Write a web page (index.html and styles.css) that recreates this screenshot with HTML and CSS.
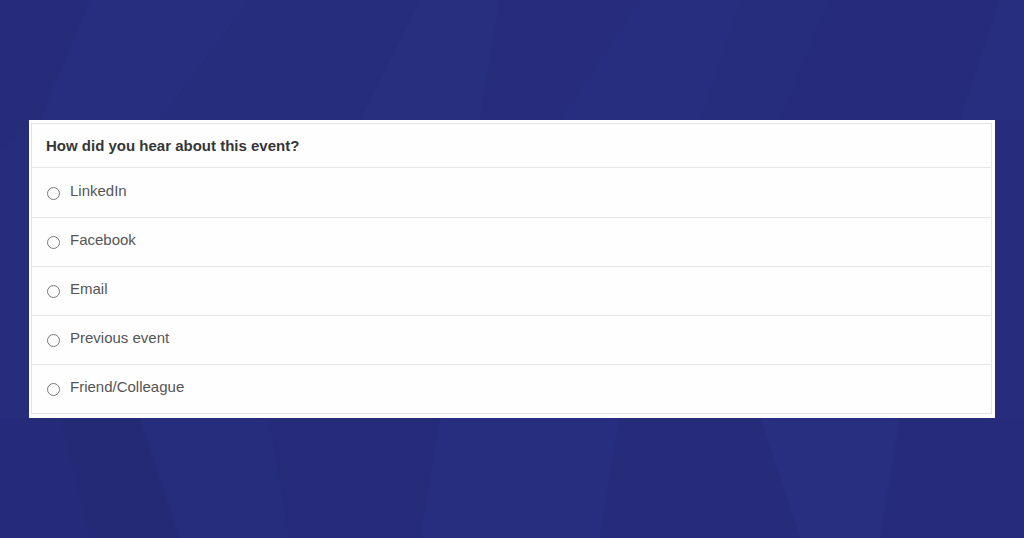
FILE: index.html
```html
<!DOCTYPE html>
<html>
<head>
<meta charset="utf-8">
<link rel="stylesheet" href="styles.css">
</head>
<body>
<svg class="bg" viewBox="0 0 1024 538" preserveAspectRatio="none" aria-hidden="true">
  <rect width="1024" height="538" fill="#272d7c"/>
  <polygon points="0,0 90,0 40,120 0,150" fill="#272c7a"/>
  <polygon points="90,0 250,0 160,120 40,120" fill="#282e7f"/>
  <polygon points="250,0 420,0 360,120 160,120" fill="#272d7d"/>
  <polygon points="420,0 500,0 480,120 360,120" fill="#282f7f"/>
  <polygon points="500,0 640,0 560,120 480,120" fill="#272c7b"/>
  <polygon points="640,0 740,0 700,120 560,120" fill="#282e7f"/>
  <polygon points="740,0 830,0 780,120 700,120" fill="#272d7d"/>
  <polygon points="830,0 1000,0 960,120 780,120" fill="#262c7b"/>
  <polygon points="1000,0 1024,0 1024,120 960,120" fill="#282e7f"/>
  <polygon points="0,418 60,418 90,538 0,538" fill="#262b79"/>
  <polygon points="60,418 140,418 180,538 90,538" fill="#252a77"/>
  <polygon points="140,418 270,418 290,538 180,538" fill="#272d7d"/>
  <polygon points="270,418 440,418 420,538 290,538" fill="#262b7a"/>
  <polygon points="440,418 620,418 600,538 420,538" fill="#282e7f"/>
  <polygon points="620,418 760,418 800,538 600,538" fill="#262b7a"/>
  <polygon points="760,418 900,418 880,538 800,538" fill="#282e80"/>
  <polygon points="900,418 1024,418 1024,538 880,538" fill="#262c7b"/>
</svg>
<main class="page">
  <section class="card">
    <div class="panel">
      <div class="question">How did you hear about this event?</div>
      <label class="option"><span class="radio"></span><span class="label">LinkedIn</span></label>
      <label class="option"><span class="radio"></span><span class="label">Facebook</span></label>
      <label class="option"><span class="radio"></span><span class="label">Email</span></label>
      <label class="option"><span class="radio"></span><span class="label">Previous event</span></label>
      <label class="option"><span class="radio"></span><span class="label">Friend/Colleague</span></label>
    </div>
  </section>
</main>
</body>
</html>
```
FILE: styles.css
```css
html, body {
  margin: 0;
  padding: 0;
  width: 1024px;
  height: 538px;
  overflow: hidden;
  background: #272d7c;
  font-family: "Liberation Sans", Arial, sans-serif;
}

.bg {
  position: absolute;
  left: 0;
  top: 0;
  width: 1024px;
  height: 538px;
  z-index: 0;
}

.page {
  position: relative;
  z-index: 1;
  padding: 120px 0 0 29px;
}

.card {
  width: 966px;
  height: 298px;
  box-sizing: border-box;
  background: #ffffff;
  padding: 3px 3px 4px 2px;
}

.panel {
  box-sizing: border-box;
  width: 961px;
  height: 291px;
  border: 1px solid #e4e4e4;
  background: #fefefe;
  display: flex;
  flex-direction: column;
}

.question {
  height: 43px;
  display: flex;
  align-items: center;
  padding-left: 14px;
  font-size: 15px;
  font-weight: bold;
  color: #363636;
  border-bottom: 1px solid #e6e6e6;
}

.option {
  height: 48px;
  display: flex;
  align-items: center;
  padding-left: 15px;
  border-bottom: 1px solid #e6e6e6;
}

.option:first-of-type {
  height: 49px;
}

.option:last-child {
  border-bottom: none;
}

.radio {
  width: 11px;
  height: 11px;
  border: 1px solid #7a7a7a;
  border-radius: 50%;
  margin-top: 1px;
  flex: none;
}

.label {
  margin-left: 10px;
  font-size: 15px;
  color: #555555;
  margin-bottom: 5px;
}
```
